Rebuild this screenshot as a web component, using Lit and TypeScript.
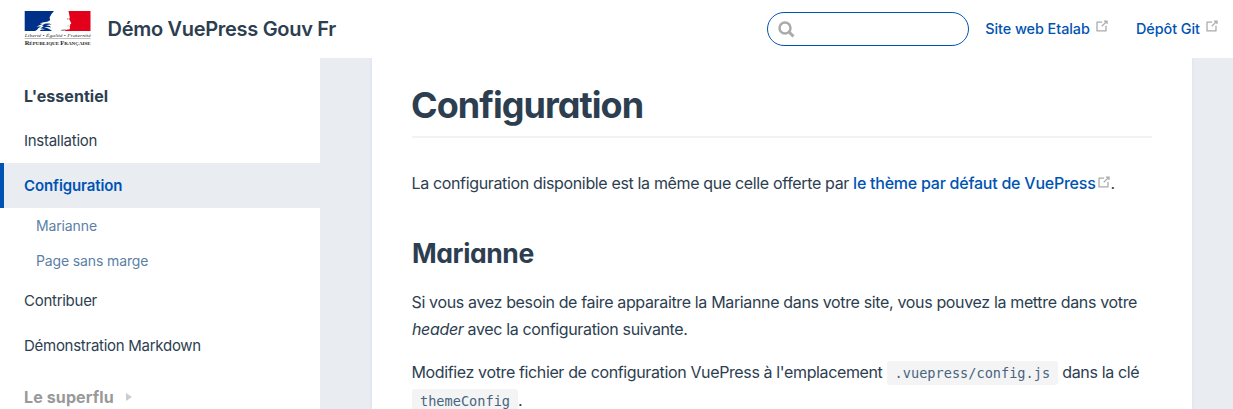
import { LitElement, html, css } from "lit";
import { customElement } from "lit/decorators.js";

@customElement("outbound-icon")
class OutboundIcon extends LitElement {
  static styles = css`
    :host { display: inline-block; width: 15px; height: 15px; line-height: 0; color: #aaa; position: relative; top: -3px; vertical-align: middle; }
    svg { display: block; }
  `;
  render() {
    return html`<svg width="16" height="16" viewBox="0 0 100 100" fill="currentColor" aria-hidden="true">
      <path d="M18.8,85.1h56l0,0c2.2,0,4-1.8,4-4v-32h-8v28h-48v-48h28v-8h-32l0,0c-2.2,0-4,1.8-4,4v56C14.8,83.3,16.6,85.1,18.8,85.1z"></path>
      <polygon points="45.7,48.7 51.3,54.3 77.2,28.5 77.2,37.2 85.2,37.2 85.2,14.9 62.8,14.9 62.8,22.9 71.5,22.9"></polygon>
    </svg>`;
  }
}

@customElement("gouv-logo")
class GouvLogo extends LitElement {
  static styles = css`
    :host { display: block; width: 67px; height: 36px; }
    svg { display: block; }
    .serif { font-family: "Liberation Serif", serif; }
    .motto { font-style: italic; font-size: 5px; fill: #333; }
    .name { font-size: 4.7px; font-weight: 700; fill: #222; }
    .cap { font-size: 6px; }
  `;
  render() {
    return html`<svg width="67" height="36" viewBox="0 0 67 36">
      <path fill="#003189" d="M.7 0H30L27.3 3.3 25.6 6.5 26.1 9.2 23.2 10.8 18.4 11.4 15.7 12.8 18.8 12.7 14.3 14.7 12.6 15.6 17.2 15.4 14.5 17.1 12.9 19.1 11 20H.7Z"></path>
      <path fill="#e2001a" d="M44.5 0H66.5V20H39.8L42.5 18.8 45.8 18.2 46 16.5 45.5 15.4 46.3 14.4 45.9 13.4 47.2 12.7 46.7 10.9 45.3 8.5 45.7 6.2 45.2 3.4Z"></path>
      <path fill="#003189" d="M18 14.2 21.5 12.5 25.5 12.4 27.5 13.8 25.4 13.4 22.2 14.3 25.6 14.9 27.2 16.4 23.5 15.9 20 16.1 23.8 17.2 26.4 18.8 28 20H15.5L17.5 18.6 21 18.4 18 17.5 16.2 17.6 19.5 15.2Z"></path>
      <path fill="#999" d="M42.8 7.5 44.8 7.2 44.3 8.7 43.4 8.8ZM43.4 14.4 45.3 14.8 43.9 15.4ZM37.5 18.7 42.3 18.1 39.8 20H36.8Z"></path>
      <text class="serif motto" x=".7" y="26" textLength="66" lengthAdjust="spacingAndGlyphs">Liberté • Égalité • Fraternité</text>
      <path d="M.7 27.5H66.5" stroke="#888" stroke-width=".55"></path>
      <text class="serif name" x=".7" y="34" textLength="66" lengthAdjust="spacingAndGlyphs"><tspan class="cap">R</tspan>ÉPUBLIQUE <tspan class="cap">F</tspan>RANÇAISE</text>
    </svg>`;
  }
}

@customElement("site-header")
class SiteHeader extends LitElement {
  static styles = css`
    :host { display: flex; align-items: center; box-sizing: border-box; height: 58px; padding: 0 14px 0 24px; background: #fff; color: #2c3e50; }
    gouv-logo { margin: -1px 16.5px 0 0; }
    .title { font-size: 20px; font-weight: 600; letter-spacing: -0.3px; white-space: nowrap; }
    .right { display: flex; align-items: center; margin-left: auto; }
    .search { display: flex; align-items: center; box-sizing: border-box; width: 202px; height: 34px; padding-left: 10px; border: 1px solid #0053b3; border-radius: 17px; margin-right: 16px; }
    .link { display: flex; align-items: center; font-size: 14.4px; font-weight: 500; letter-spacing: -0.05px; color: #0053b3; white-space: nowrap; text-decoration: none; margin-top: -1px; }
    .link + .link { margin-left: 27px; }
    outbound-icon { margin: 0 0 0 4.1px; }
  `;
  render() {
    return html`
      <gouv-logo></gouv-logo>
      <span class="title">Démo VuePress Gouv Fr</span>
      <div class="right">
        <div class="search">
          <svg width="17" height="17" viewBox="0 0 17 17" fill="none" stroke="#aaa" aria-hidden="true">
            <circle cx="7" cy="7" r="5.5" stroke-width="2.5"></circle>
            <path d="M11 11 15.5 15.5" stroke-width="3"></path>
          </svg>
        </div>
        <a class="link">Site web Etalab<outbound-icon></outbound-icon></a>
        <a class="link">Dépôt Git<outbound-icon></outbound-icon></a>
      </div>`;
  }
}

@customElement("side-nav")
class SideNav extends LitElement {
  static styles = css`
    :host { display: block; box-sizing: border-box; width: 320px; flex: none; padding-top: 16px; background: #fff; color: #2c3e50; }
    .group { display: flex; align-items: center; box-sizing: border-box; height: 44px; padding: 0 0 1px 24px; font-size: 16px; font-weight: 700; letter-spacing: 0.04px; }
    .item { display: flex; align-items: center; box-sizing: border-box; height: 45px; padding-left: 24px; font-size: 15px; letter-spacing: -0.27px; }
    .item.active { border-left: 4px solid #0053b3; padding-left: 20px; background: #e9edf2; color: #0053b3; font-weight: 600; letter-spacing: -0.1px; }
    .sub { display: flex; align-items: center; height: 35px; padding-left: 36px; font-size: 14px; letter-spacing: -0.13px; color: #5b7fa6; }
    .group.closed { height: 58px; color: #999; letter-spacing: 0.12px; }
    .arrow { margin-left: 12px; border-left: 6px solid #ccc; border-top: 4px solid transparent; border-bottom: 4px solid transparent; }
  `;
  render() {
    return html`
      <div class="group">L'essentiel</div>
      <div class="item">Installation</div>
      <div class="item active">Configuration</div>
      <div class="sub">Marianne</div>
      <div class="sub">Page sans marge</div>
      <div class="item">Contribuer</div>
      <div class="item">Démonstration Markdown</div>
      <div class="group closed">Le superflu<span class="arrow"></span></div>`;
  }
}

@customElement("doc-page")
class DocPage extends LitElement {
  static styles = css`
    :host { display: block; box-sizing: border-box; width: 824px; flex: none; padding: 0 40px; background: #fff; border: solid #e2e8f0; border-width: 0 2px; color: #2c3e50; font-size: 16px; line-height: 27.2px; letter-spacing: -0.35px; }
    h1, h2 { margin: 0; font-weight: 650; font-feature-settings: "cv11"; }
    h1 { box-sizing: border-box; height: 80px; padding-top: 20px; border-bottom: 2px solid #f1f2f3; font-size: 36px; line-height: 54px; letter-spacing: -0.95px; text-indent: -1px; }
    h2 { margin-top: 40px; font-size: 26.5px; line-height: 32px; letter-spacing: -0.4px; }
    p { margin: 0; white-space: nowrap; text-indent: -0.5px; }
    .lead { margin-top: 32px; }
    .after { margin-top: 20px; }
    .next { margin-top: 15px; }
    .link { color: #0053b3; font-weight: 500; letter-spacing: -0.24px; }
    .code { font-family: "DejaVu Sans Mono", monospace; font-size: 13.6px; letter-spacing: 0; color: #476582; background: #f4f4f4; border-radius: 3px; padding: 4px 8px; }
    .first { letter-spacing: -0.37px; }
  `;
  render() {
    return html`
      <h1>Configuration</h1>
      <p class="lead">La configuration disponible est la même que celle offerte par <a class="link">le thème par défaut de VuePress<outbound-icon></outbound-icon></a>.</p>
      <h2>Marianne</h2>
      <p class="after">Si vous avez besoin de faire apparaitre la Marianne dans votre site, vous pouvez la mettre dans votre<br><em>header</em> avec la configuration suivante.</p>
      <p class="next"><span class="first">Modifiez votre fichier de configuration VuePress à l'emplacement </span><code class="code">.vuepress/config.js</code> dans la clé<br><code class="code">themeConfig</code>.</p>`;
  }
}

@customElement("app-root")
class AppRoot extends LitElement {
  static styles = css`
    :host { display: flex; flex-direction: column; width: 1233px; height: 409px; overflow: hidden; font-family: Inter, "Liberation Sans", sans-serif; background: #e9edf2; }
    .body { display: flex; flex: 1; min-height: 0; }
    doc-page { margin-left: 50px; }
  `;
  render() {
    return html`<site-header></site-header><div class="body"><side-nav></side-nav><doc-page></doc-page></div>`;
  }
}
